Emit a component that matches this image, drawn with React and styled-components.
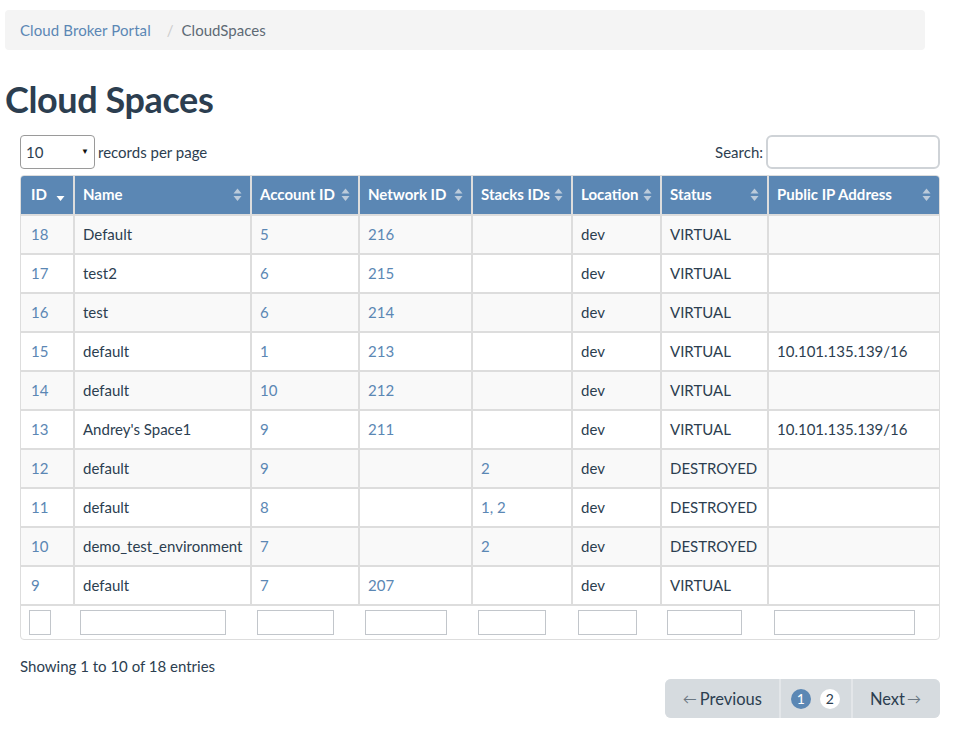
import React from "react";
import styled, { createGlobalStyle } from "styled-components";

const GlobalStyle = createGlobalStyle`
   html, body {
      margin: 0;
      padding: 0;
      background: #ffffff;
   }
   body {
      font-family: Lato, "Open Sans", "Liberation Sans", sans-serif;
      font-size: 15px;
      color: #2c3e50;
   }
   * {
      box-sizing: border-box;
   }
`;

const columns = [
   { key: "id", label: "ID", width: 52, input: 22, sorted: true },
   { key: "name", label: "Name", width: 177, input: 146 },
   { key: "account", label: "Account ID", width: 108, input: 77 },
   { key: "network", label: "Network ID", width: 113, input: 82 },
   { key: "stacks", label: "Stacks IDs", width: 100, input: 68 },
   { key: "location", label: "Location", width: 89, input: 59 },
   { key: "status", label: "Status", width: 107, input: 75 },
   { key: "ip", label: "Public IP Address", width: 172, input: 141 },
];

const rows = [
   ["18", "Default", "5", "216", "", "dev", "VIRTUAL", ""],
   ["17", "test2", "6", "215", "", "dev", "VIRTUAL", ""],
   ["16", "test", "6", "214", "", "dev", "VIRTUAL", ""],
   ["15", "default", "1", "213", "", "dev", "VIRTUAL", "10.101.135.139/16"],
   ["14", "default", "10", "212", "", "dev", "VIRTUAL", ""],
   ["13", "Andrey's Space1", "9", "211", "", "dev", "VIRTUAL", "10.101.135.139/16"],
   ["12", "default", "9", "", "2", "dev", "DESTROYED", ""],
   ["11", "default", "8", "", "1, 2", "dev", "DESTROYED", ""],
   ["10", "demo_test_environment", "7", "", "2", "dev", "DESTROYED", ""],
   ["9", "default", "7", "207", "", "dev", "VIRTUAL", ""],
];

const linkCols = [0, 2, 3, 4];

function SortIcon({ sorted }) {
   if (sorted) {
      return (
         <svg width="9" height="14" viewBox="0 0 9 14">
            <path d="M0.5 8 L8.5 8 L4.5 13 Z" fill="#ffffff" />
         </svg>
      );
   }
   return (
      <svg width="9" height="14" viewBox="0 0 9 14">
         <path d="M4.5 0.5 L8.5 5.5 L0.5 5.5 Z" fill="#bccbdb" />
         <path d="M0.5 8 L8.5 8 L4.5 13 Z" fill="#bccbdb" />
      </svg>
   );
}

function App() {
   return (
      <Page>
         <GlobalStyle />
         <Breadcrumb>
            <Crumb href="#">Cloud Broker Portal</Crumb>
            <Divider>/</Divider>
            <Current>CloudSpaces</Current>
         </Breadcrumb>
         <Title>Cloud Spaces</Title>
         <Section>
            <Toolbar>
               <Length>
                  <Select>
                     <span>10</span>
                     <Caret>▼</Caret>
                  </Select>
                  records per page
               </Length>
               <SearchBox>
                  Search:
                  <SearchInput type="text" />
               </SearchBox>
            </Toolbar>
            <TableFrame>
               <Table>
                  <thead>
                     <tr>
                        {columns.map((c, i) => (
                           <HeadCell key={c.key} $first={i === 0} style={{ width: c.width }}>
                              <HeadInner>
                                 <span>{c.label}</span>
                                 <SortIcon sorted={c.sorted} />
                              </HeadInner>
                           </HeadCell>
                        ))}
                     </tr>
                  </thead>
                  <tbody>
                     {rows.map((r, ri) => (
                        <Row key={r[0]} $odd={ri % 2 === 0}>
                           {r.map((v, ci) => (
                              <Cell key={ci} $first={ci === 0}>
                                 {linkCols.includes(ci) && v ? <CellLink href="#">{v}</CellLink> : v}
                              </Cell>
                           ))}
                        </Row>
                     ))}
                     <tr>
                        {columns.map((c, i) => (
                           <FilterCell key={c.key} $first={i === 0}>
                              <FilterInput type="text" $w={c.input} />
                           </FilterCell>
                        ))}
                     </tr>
                  </tbody>
               </Table>
            </TableFrame>
            <Info>Showing 1 to 10 of 18 entries</Info>
            <PagerRow>
               <Pager>
                  <PagerItem $pad="0 17px 0 18px">
                     <Arrow $side="left">←</Arrow>Previous
                  </PagerItem>
                  <PagerItem $pages $pad="0 11px 0 10px">
                     <PageDot $active>1</PageDot>
                     <PageDot>2</PageDot>
                  </PagerItem>
                  <PagerItem $pad="0 19px 0 17px">
                     Next<Arrow $side="right">→</Arrow>
                  </PagerItem>
               </Pager>
            </PagerRow>
         </Section>
      </Page>
   );
}

export default App;

const Page = styled.div`
   padding: 10px 30px 20px 5px;
   width: 955px;
`;

const Breadcrumb = styled.div`
   width: 920px;
   height: 40px;
   background: #f4f4f4;
   border-radius: 4px;
   display: flex;
   align-items: center;
   padding: 0 15px;
   font-size: 15px;
`;

const Crumb = styled.a`
   color: #5b87b4;
   text-decoration: none;
   letter-spacing: 0.1px;
`;

const Divider = styled.span`
   color: #cccccc;
   padding: 0 8px 0 16px;
`;

const Current = styled.span`
   color: #5e6a74;
`;

const Title = styled.h1`
   margin: 28px 0 0;
   font-size: 36px;
   letter-spacing: -0.4px;
   line-height: 43px;
   font-weight: 700;
   color: #2c3e50;
`;

const Section = styled.div`
   padding-left: 15px;
   width: 935px;
`;

const Toolbar = styled.div`
   display: flex;
   justify-content: space-between;
   align-items: center;
   margin-top: 13px;
   height: 35px;
`;

const Length = styled.div`
   display: flex;
   align-items: center;
   gap: 3px;
   font-size: 15px;
`;

const Select = styled.div`
   width: 75px;
   height: 34px;
   border: 1px solid #9a9a9a;
   border-radius: 4px;
   display: flex;
   align-items: center;
   justify-content: space-between;
   padding: 0 5px 0 5px;
   font-size: 15px;
   color: #2c3e50;
`;

const Caret = styled.span`
   font-size: 8px;
   color: #111111;
   margin-top: -2px;
`;

const SearchBox = styled.label`
   display: flex;
   align-items: center;
   gap: 3px;
   font-size: 15px;
`;

const SearchInput = styled.input`
   width: 174px;
   height: 34px;
   border: 2px solid #cfd3d7;
   border-radius: 6px;
   outline: none;
   background: #ffffff;
`;

const TableFrame = styled.div`
   margin-top: 6px;
   width: 920px;
   border: 1px solid #dddddd;
   border-radius: 4px;
   overflow: hidden;
`;

const Table = styled.table`
   width: 918px;
   table-layout: fixed;
   border-collapse: separate;
   border-spacing: 0;
   font-size: 15px;
`;

const HeadCell = styled.th`
   background: #5b87b4;
   color: #ffffff;
   font-weight: 700;
   text-align: left;
   height: 38px;
   padding: 0 8px 1px ${(p) => (p.$first ? "10px" : "8px")};
   border-left: ${(p) => (p.$first ? "none" : "2px solid #dddddd")};
   white-space: nowrap;
`;

const HeadInner = styled.div`
   display: flex;
   align-items: center;
   justify-content: space-between;
   line-height: 21px;
`;

const Row = styled.tr`
   background: ${(p) => (p.$odd ? "#f9f9f9" : "#ffffff")};
`;

const Cell = styled.td`
   height: 39px;
   padding: 0 8px 0 ${(p) => (p.$first ? "10px" : "8px")};
   border-top: 2px solid #dddddd;
   border-left: ${(p) => (p.$first ? "none" : "2px solid #dddddd")};
   line-height: 21px;
   color: #2c3e50;
   white-space: nowrap;
`;

const CellLink = styled.a`
   color: #5b87b4;
   text-decoration: none;
`;

const FilterCell = styled.td`
   height: 35px;
   padding: 0 6px 0 ${(p) => (p.$first ? "8px" : "7px")};
   border-top: 2px solid #dddddd;
   vertical-align: middle;
`;

const FilterInput = styled.input`
   display: block;
   width: ${(p) => p.$w}px;
   height: 25px;
   border: 1px solid #c2c6cb;
   border-radius: 0;
   outline: none;
   background: #ffffff;
   padding: 0;
`;

const Info = styled.div`
   margin-top: 16px;
   font-size: 15px;
   line-height: 20px;
   color: #2c3e50;
`;

const PagerRow = styled.div`
   display: flex;
   justify-content: flex-end;
   margin-top: 3px;
   width: 920px;
`;

const Pager = styled.div`
   display: flex;
   height: 39px;
   border-radius: 6px;
   overflow: hidden;
   background: #e3e6e9;
   gap: 2px;
`;

const PagerItem = styled.div`
   display: flex;
   align-items: center;
   gap: ${(p) => (p.$pages ? "9px" : "0")};
   padding: ${(p) => p.$pad};
   background: #d6dbdf;
   font-size: 16.5px;
   color: #2c3e50;
`;

const Arrow = styled.span`
   color: #6b7782;
   font-size: 14px;
   margin: ${(p) => (p.$side === "left" ? "0 3px 0 0" : "0 0 0 2px")};
`;

const PageDot = styled.span`
   width: 20px;
   height: 20px;
   border-radius: 50%;
   display: flex;
   align-items: center;
   justify-content: center;
   font-size: 14px;
   background: ${(p) => (p.$active ? "#5b87b4" : "#ffffff")};
   color: ${(p) => (p.$active ? "#ffffff" : "#2c3e50")};
`;
